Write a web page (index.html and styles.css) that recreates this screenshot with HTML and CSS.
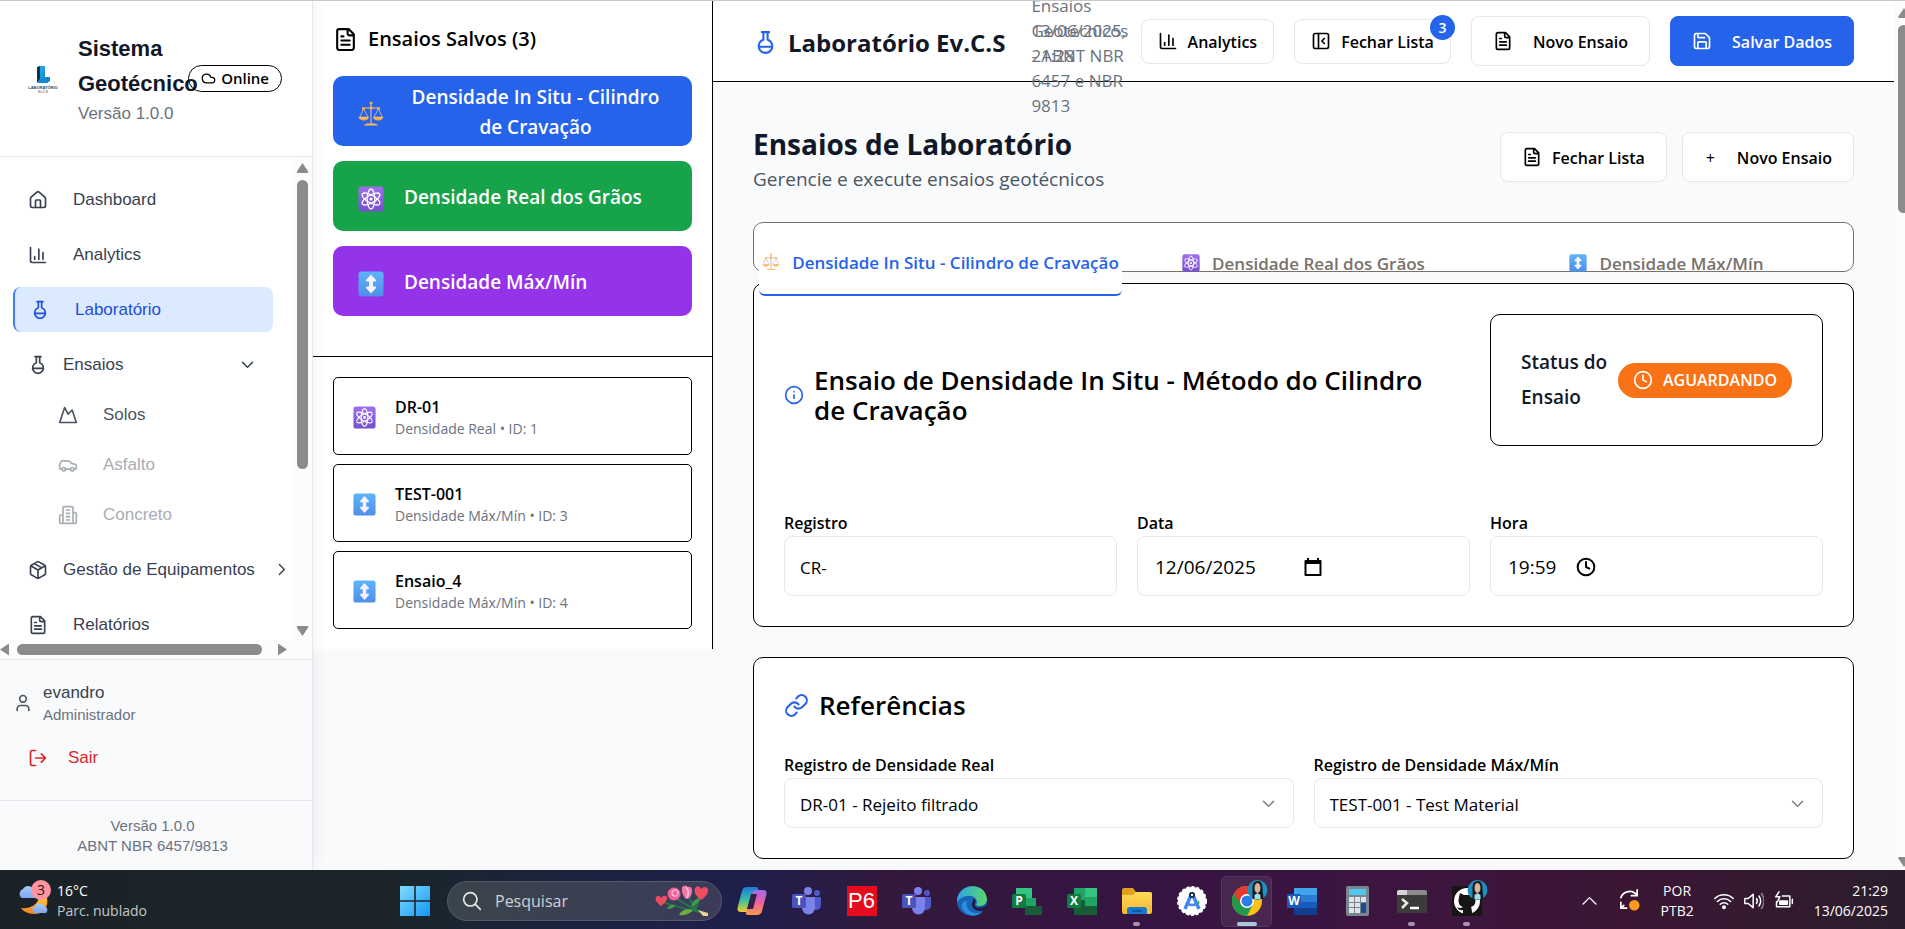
FILE: index.html
```html
<!DOCTYPE html>
<html lang="pt-BR">
<head>
<meta charset="utf-8">
<title>Laboratório Ev.C.S</title>
<link rel="stylesheet" href="styles.css">
</head>
<body>
<svg class="sprite" aria-hidden="true">
  <defs>
    <linearGradient id="g-violet" x1="0" y1="0" x2="0" y2="1"><stop offset="0" stop-color="#a070ee"/><stop offset="1" stop-color="#7650cc"/></linearGradient>
    <linearGradient id="g-sky" x1="0" y1="0" x2="0" y2="1"><stop offset="0" stop-color="#5fb4fa"/><stop offset="1" stop-color="#4f8fe8"/></linearGradient>
    <linearGradient id="g-pan" x1="0" y1="0" x2="0" y2="1"><stop offset="0" stop-color="#ffc45c"/><stop offset="1" stop-color="#f79a3e"/></linearGradient>
    <linearGradient id="g-logo" x1="0" y1="0" x2="1" y2="1"><stop offset="0" stop-color="#2aa8ea"/><stop offset="1" stop-color="#0a7ccc"/></linearGradient>
    <linearGradient id="g-win" x1="0" y1="0" x2="1" y2="1"><stop offset="0" stop-color="#7fdcff"/><stop offset="1" stop-color="#1597f5"/></linearGradient>
    <linearGradient id="g-cop1" x1="0" y1="0" x2="0" y2="1"><stop offset="0" stop-color="#1c7be0"/><stop offset=".55" stop-color="#3fc2a0"/><stop offset="1" stop-color="#f6c92c"/></linearGradient>
    <linearGradient id="g-cop2" x1="0" y1="0" x2="0" y2="1"><stop offset="0" stop-color="#a06cf0"/><stop offset=".5" stop-color="#f0609c"/><stop offset="1" stop-color="#fb9a4b"/></linearGradient>
    <linearGradient id="g-edge" x1="0" y1="0" x2="1" y2="0"><stop offset="0" stop-color="#2aa5e8"/><stop offset="1" stop-color="#5ad66a"/></linearGradient>
    <linearGradient id="g-moon" x1="0" y1="0" x2="0" y2="1"><stop offset="0" stop-color="#ffc53d"/><stop offset="1" stop-color="#f07d1a"/></linearGradient>
    <linearGradient id="g-cloud" x1="0" y1="0" x2="0" y2="1"><stop offset="0" stop-color="#a9ccfa"/><stop offset="1" stop-color="#7fa6ee"/></linearGradient>
    <linearGradient id="g-folder" x1="0" y1="0" x2="0" y2="1"><stop offset="0" stop-color="#ffd95a"/><stop offset="1" stop-color="#f9b92e"/></linearGradient>
  </defs>
  <symbol id="home" viewBox="0 0 24 24"><path d="M15 21v-8a1 1 0 0 0-1-1h-4a1 1 0 0 0-1 1v8"/><path d="M3 10a2 2 0 0 1 .709-1.528l7-5.999a2 2 0 0 1 2.582 0l7 5.999A2 2 0 0 1 21 10v9a2 2 0 0 1-2 2H5a2 2 0 0 1-2-2z"/></symbol>
  <symbol id="chart" viewBox="0 0 24 24"><path d="M3 3v16a2 2 0 0 0 2 2h16M18 17V9M13 17V5M8 17v-3"/></symbol>
  <symbol id="flask" viewBox="0 0 24 24"><path d="M10 2v7.31M14 9.3V2M8.5 2h7M14 9.3a6.5 6.5 0 1 1-4 0M5.52 16h12.96"/></symbol>
  <symbol id="mountain" viewBox="0 0 24 24"><path d="m8 3 4 8 5-5 5 15H2L8 3z"/></symbol>
  <symbol id="car" viewBox="0 0 24 24"><path d="M19 17h2c.6 0 1-.4 1-1v-3c0-.9-.7-1.7-1.5-1.9C18.7 10.6 16 10 16 10s-1.3-1.4-2.2-2.3c-.5-.4-1.1-.7-1.8-.7H5c-.6 0-1.1.4-1.4.9l-1.4 2.9A3.7 3.7 0 0 0 2 12v4c0 .6.4 1 1 1h2M9 17h6"/><circle cx="7" cy="17" r="2"/><circle cx="17" cy="17" r="2"/></symbol>
  <symbol id="building" viewBox="0 0 24 24"><path d="M6 22V4a2 2 0 0 1 2-2h8a2 2 0 0 1 2 2v18ZM6 12H4a2 2 0 0 0-2 2v6a2 2 0 0 0 2 2h2M18 9h2a2 2 0 0 1 2 2v9a2 2 0 0 1-2 2h-2M10 6h4M10 10h4M10 14h4M10 18h4"/></symbol>
  <symbol id="package" viewBox="0 0 24 24"><path d="M11 21.73a2 2 0 0 0 2 0l7-4A2 2 0 0 0 21 16V8a2 2 0 0 0-1-1.73l-7-4a2 2 0 0 0-2 0l-7 4A2 2 0 0 0 3 8v8a2 2 0 0 0 1 1.73zM12 22V12M3.29 7 12 12l8.71-5M7.5 4.27l9 5.15"/></symbol>
  <symbol id="file" viewBox="0 0 24 24"><path d="M15 2H6a2 2 0 0 0-2 2v16a2 2 0 0 0 2 2h12a2 2 0 0 0 2-2V7ZM14 2v4a2 2 0 0 0 2 2h4M10 9H8M16 13H8M16 17H8"/></symbol>
  <symbol id="user" viewBox="0 0 24 24"><path d="M19 21v-2a4 4 0 0 0-4-4H9a4 4 0 0 0-4 4v2"/><circle cx="12" cy="7" r="4"/></symbol>
  <symbol id="logout" viewBox="0 0 24 24"><path d="M9 21H5a2 2 0 0 1-2-2V5a2 2 0 0 1 2-2h4M16 17l5-5-5-5M21 12H9"/></symbol>
  <symbol id="cloud" viewBox="0 0 24 24"><path d="M17.5 19H9a7 7 0 1 1 6.71-9h1.79a4.5 4.5 0 1 1 0 9Z"/></symbol>
  <symbol id="panel" viewBox="0 0 24 24"><rect x="3" y="3" width="18" height="18" rx="2"/><path d="M9 3v18M16 15l-3-3 3-3"/></symbol>
  <symbol id="save" viewBox="0 0 24 24"><path d="M15.2 3a2 2 0 0 1 1.4.6l3.8 3.8a2 2 0 0 1 .6 1.4V19a2 2 0 0 1-2 2H5a2 2 0 0 1-2-2V5a2 2 0 0 1 2-2zM17 21v-7a1 1 0 0 0-1-1H8a1 1 0 0 0-1 1v7M7 3v4a1 1 0 0 0 1 1h7"/></symbol>
  <symbol id="info" viewBox="0 0 24 24"><circle cx="12" cy="12" r="10"/><path d="M12 16v-4M12 8h.01"/></symbol>
  <symbol id="clock" viewBox="0 0 24 24"><circle cx="12" cy="12" r="10"/><path d="M12 6v6l4 2"/></symbol>
  <symbol id="link" viewBox="0 0 24 24"><path d="M10 13a5 5 0 0 0 7.54.54l3-3a5 5 0 0 0-7.07-7.07l-1.72 1.71M14 11a5 5 0 0 0-7.54-.54l-3 3a5 5 0 0 0 7.07 7.07l1.71-1.71"/></symbol>
  <symbol id="chev-down" viewBox="0 0 24 24"><path d="m5 9 7 7 7-7"/></symbol>
  <symbol id="chev-right" viewBox="0 0 24 24"><path d="m9 5 7 7-7 7"/></symbol>
  <symbol id="calendar" viewBox="0 0 20 20"><path d="M2.5 4h15v14h-15z" fill="none" stroke="#000" stroke-width="2" stroke-linejoin="round"/><path d="M2 3h16v4H2zM4 1h2v3H4zM14 1h2v3h-2z" fill="#000" stroke="none"/></symbol>
  <symbol id="scale" viewBox="0 0 26 26">
    <path d="M13 2v20" stroke="#b9a5b4" stroke-width="1.4"/><path d="M4 7h18" stroke="#c9a38a" stroke-width="1.3"/>
    <path d="M5.500 7.500 2 16M5.500 7.500 10 16M20.500 7.500 16 16M20.500 7.500 24 16" stroke="#c2a6b4" stroke-width="1" fill="none"/>
    <path d="M.8 15.800h10c0 5-10 5-10 0zM15.200 15.800h10c0 5-10 5-10 0z" fill="url(#g-pan)"/>
    <path d="M6 24.500c0-3 14-3 14 0z" fill="#fdb94d"/><circle cx="13" cy="2" r="1.500" fill="#fbb03b"/><circle cx="13" cy="7" r="1.700" fill="#fbb03b"/><circle cx="5.500" cy="7.500" r="1.500" fill="#fbb03b"/><circle cx="20.500" cy="7.500" r="1.500" fill="#fbb03b"/>
  </symbol>
  <symbol id="atom" viewBox="0 0 26 26">
    <rect x=".5" y=".5" width="25" height="25" rx="3" fill="url(#g-violet)"/>
    <g fill="none" stroke="#fff" stroke-width="1.300"><ellipse cx="13" cy="13" rx="3.800" ry="10"/><ellipse cx="13" cy="13" rx="3.800" ry="10" transform="rotate(60 13 13)"/><ellipse cx="13" cy="13" rx="3.800" ry="10" transform="rotate(120 13 13)"/></g><circle cx="13" cy="13" r="1.600" fill="#fff"/>
  </symbol>
  <symbol id="updown" viewBox="0 0 26 26"><rect x=".5" y=".5" width="25" height="25" rx="3" fill="url(#g-sky)"/><path d="M13 3.500l5 5.500q.5 1.500-1 1.500h-2v5h2q1.500 0 1 1.500l-5 5.500-5-5.500q-.5-1.500 1-1.500h2v-5H9q-1.500 0-1-1.500z" fill="#f7f2ff"/></symbol>
  <symbol id="teams" viewBox="0 0 30 30"><circle cx="16" cy="5" r="4" fill="#7b83eb"/><circle cx="25" cy="7" r="3" fill="#5059c9"/><path d="M20 11h9v8a5 5 0 0 1-9 3z" fill="#5059c9"/><path d="M10 11h13v11a6.500 6.500 0 0 1-13 0z" fill="#7b83eb"/><rect y="8" width="14" height="14" rx="1.500" fill="#4b53bc"/></symbol>
  <symbol id="photo" viewBox="0 0 20 20"><circle cx="10" cy="10" r="10" fill="#1f8fc0"/><path d="M5 19V7q0-6 6-6 4 1 4 7v3l1 8z" fill="#15181c"/><ellipse cx="10" cy="8" rx="3" ry="5" fill="#d8b59a"/><path d="M7 15l3-2 3 2v4H7z" fill="#a5d9ec"/></symbol>
</svg>

<div class="app">
  <aside class="sidebar">
    <header class="brand">
      <svg class="brand-logo" viewBox="0 0 30 28" role="img" aria-label="Laboratório Ev.C.S"><path d="M11 1h6v11h5v4l-3 2h-8z" fill="url(#g-logo)"/><path d="M9 2l3-1v13l-3 4z" fill="#0b3350"/><path d="M9 18l3-4h10l-3 4z" fill="#1188cf"/><text class="logo-name" x="15" y="24">LABORATÓRIO</text><text class="logo-sub" x="15" y="28">Ev.C.S</text></svg>
      <div class="brand-text">
        <h1>Sistema Geotécnico</h1>
        <p>Versão 1.0.0</p>
      </div>
      <span class="online"><svg class="i i15"><use href="#cloud"/></svg>Online</span>
    </header>

    <div class="nav-frame">
      <nav class="nav">
        <a href="#"><svg class="i i20"><use href="#home"/></svg>Dashboard</a>
        <a href="#"><svg class="i i20"><use href="#chart"/></svg>Analytics</a>
        <a href="#" class="active"><svg class="i i20"><use href="#flask"/></svg>Laboratório</a>
        <button class="group"><svg class="i i20"><use href="#flask"/></svg>Ensaios<svg class="i i17 push"><use href="#chev-down"/></svg></button>
        <div class="sub">
          <a href="#"><svg class="i i20"><use href="#mountain"/></svg>Solos</a>
          <a href="#" class="off"><svg class="i i20"><use href="#car"/></svg>Asfalto</a>
          <a href="#" class="off"><svg class="i i20"><use href="#building"/></svg>Concreto</a>
        </div>
        <button class="group long"><svg class="i i20"><use href="#package"/></svg>Gestão de Equipamentos<svg class="i i17 push"><use href="#chev-right"/></svg></button>
        <a href="#"><svg class="i i20"><use href="#file"/></svg>Relatórios</a>
      </nav>
      <div class="vbar" aria-hidden="true"><i class="arr up"></i><i class="thumb thumb-nav"></i><i class="rest rest-nav"></i><i class="arr down"></i></div>
      <div class="hbar" aria-hidden="true"><i class="arr left"></i><i class="thumb"></i><i class="arr right"></i></div>
    </div>

    <section class="account">
      <div class="who"><svg class="i i20"><use href="#user"/></svg><div><p class="name">evandro</p><p class="role">Administrador</p></div></div>
      <button class="exit"><svg class="i i20"><use href="#logout"/></svg>Sair</button>
    </section>
    <footer class="side-foot"><p>Versão 1.0.0</p><p>ABNT NBR 6457/9813</p></footer>
  </aside>

  <section class="saved">
    <div class="saved-top">
      <h2><svg class="i i25"><use href="#file"/></svg>Ensaios Salvos (3)</h2>
      <button class="kind blue"><svg class="e26"><use href="#scale"/></svg><span class="wide">Densidade In Situ - Cilindro de Cravação</span></button>
      <button class="kind green"><svg class="e26"><use href="#atom"/></svg><span>Densidade Real dos Grãos</span></button>
      <button class="kind purple"><svg class="e26"><use href="#updown"/></svg><span>Densidade Máx/Mín</span></button>
    </div>
    <div class="saved-list">
      <button class="item"><svg class="e23"><use href="#atom"/></svg><span><b>DR-01</b><small>Densidade Real • ID: 1</small></span></button>
      <button class="item"><svg class="e23"><use href="#updown"/></svg><span><b>TEST-001</b><small>Densidade Máx/Mín • ID: 3</small></span></button>
      <button class="item"><svg class="e23"><use href="#updown"/></svg><span><b>Ensaio_4</b><small>Densidade Máx/Mín • ID: 4</small></span></button>
    </div>
  </section>

  <main class="main">
    <header class="topbar">
      <div class="title"><svg class="i i25"><use href="#flask"/></svg><h2>Laboratório Ev.C.S</h2></div>
      <div class="captions">
        <p class="caption">Ensaios Geotécnicos - ABNT NBR 6457 e NBR 9813</p>
        <p class="caption stamp">13/06/2025, 21:28</p>
      </div>
      <div class="tools">
        <button class="btn small"><svg class="i i20"><use href="#chart"/></svg>Analytics</button>
        <button class="btn small"><svg class="i i20"><use href="#panel"/></svg>Fechar Lista<span class="count">3</span></button>
        <button class="btn"><svg class="i i20"><use href="#file"/></svg>Novo Ensaio</button>
        <button class="btn primary"><svg class="i i20"><use href="#save"/></svg>Salvar Dados</button>
      </div>
    </header>

    <div class="content">
      <div class="page-head">
        <div><h1>Ensaios de Laboratório</h1><p>Gerencie e execute ensaios geotécnicos</p></div>
        <div class="page-actions">
          <button class="btn tight"><svg class="i i20"><use href="#file"/></svg>Fechar Lista</button>
          <button class="btn"><span class="plus">+</span>Novo Ensaio</button>
        </div>
      </div>

      <div class="tabs" role="tablist">
        <button role="tab" aria-selected="true" class="tab on"><svg class="e18"><use href="#scale"/></svg>Densidade In Situ - Cilindro de Cravação</button>
        <button role="tab" class="tab"><svg class="e18"><use href="#atom"/></svg>Densidade Real dos Grãos</button>
        <button role="tab" class="tab"><svg class="e18"><use href="#updown"/></svg>Densidade Máx/Mín</button>
      </div>

      <section class="card">
        <div class="intro">
          <h2 class="card-title"><svg class="i i20"><use href="#info"/></svg>Ensaio de Densidade In Situ - Método do Cilindro de Cravação</h2>
          <div class="status"><span class="status-label">Status do Ensaio</span><span class="pill"><svg class="i i20"><use href="#clock"/></svg>AGUARDANDO</span></div>
        </div>
        <div class="grid three">
          <div><label for="reg">Registro</label><div class="field"><input id="reg" type="text" value="CR-"></div></div>
          <div><label for="data">Data</label><div class="field native"><input id="data" class="date" type="text" value="12/06/2025"><svg class="e20"><use href="#calendar"/></svg></div></div>
          <div><label for="hora">Hora</label><div class="field native"><input id="hora" class="time" type="text" value="19:59"><svg class="i i20 bold"><use href="#clock"/></svg></div></div>
        </div>
      </section>

      <section class="card refs">
        <h2 class="card-title"><svg class="i i25"><use href="#link"/></svg>Referências</h2>
        <div class="grid two">
          <div><label for="real">Registro de Densidade Real</label><div class="pick"><select id="real"><option>DR-01 - Rejeito filtrado</option></select><svg class="i i17"><use href="#chev-down"/></svg></div></div>
          <div><label for="maxmin">Registro de Densidade Máx/Mín</label><div class="pick"><select id="maxmin"><option>TEST-001 - Test Material</option></select><svg class="i i17"><use href="#chev-down"/></svg></div></div>
        </div>
      </section>
    </div>
  </main>
  <div class="vbar page-bar" aria-hidden="true"><i class="arr up"></i><i class="thumb thumb-page"></i><i class="rest rest-page"></i><i class="arr down"></i></div>
</div>

<footer class="taskbar">
  <div class="weather">
    <div class="weather-icon">
      <svg viewBox="0 0 32 32"><path d="M5 14a5 5 0 0 1 1-9 6 6 0 0 1 11 2 4 4 0 0 1 1 7z" fill="url(#g-cloud)"/><path d="M4 24c9 1 16-3 18-10h8c2 10-5 16-12 16-6 0-11-2-14-6z" fill="url(#g-moon)"/><path d="M17 29a4 4 0 0 1 1-7 5 5 0 0 1 9 0 4 4 0 0 1 2 7z" fill="url(#g-cloud)"/></svg>
      <span class="alert">3</span>
    </div>
    <div><p>16°C</p><p class="dim">Parc. nublado</p></div>
  </div>
  <div class="dock">
    <span class="app-ico"><svg class="t30" viewBox="0 0 30 30"><path d="M0 0h14.200v14.200H0zM15.800 0H30v14.200H15.800zM0 15.800h14.200V30H0zM15.800 15.800H30V30H15.800z" fill="url(#g-win)"/></svg></span>
    <div class="search">
      <svg class="i i20 lens" viewBox="0 0 24 24"><circle cx="10" cy="10" r="8"/><path d="m16 16 6 6"/></svg>
      <input type="text" aria-label="Pesquisar" value="Pesquisar">
      <svg class="flowers" viewBox="0 0 54 32"><g fill="none" stroke="#1f7a4c" stroke-width="1.800"><path d="M7 17q18 6 38 10M19 12q12 8 26 15M32 10l10 16M46 11l-6 14"/></g><path d="M24 30q4-8 14-5-4 6-14 5z" fill="#6cae3e"/><path d="M12 24q2-5 8-4-1 4-8 4zM36 22q7-2 9-9-8 1-9 9z" fill="#3f9a4a"/><path d="M6 21Q-1 16 1 12q3-3 5 1 3-4 6-1 1 4-6 9zM46 15q-8-6-6-12 4-4 6 1 4-4 7 0 1 6-7 11z" fill="#ee4d5f"/><circle cx="19" cy="9" r="6.500" fill="#f0609a"/><circle cx="20" cy="8" r="3" fill="none" stroke="#ffb0cc" stroke-width="1.500"/><path d="M27 2q3-3 6 0 4-1 4 4 0 7-6 8-5-5-4-12z" fill="#f277a6"/><path d="M31 2q4 4 1 11" stroke="#ffc0d5" fill="none" stroke-width="1.500"/><path d="m43 25 10 3v3h-5z" fill="#ead49a"/></svg>
    </div>
    <span class="app-ico"><svg class="t30" viewBox="0 0 30 30"><path d="M10 1h9q3 0 2 3l-6 18q-1 4-5 4H4q-5 0-3-6L5 5q1-4 5-4z" fill="url(#g-cop1)"/><path d="M20 29h-9q-3 0-2-3l6-18q1-4 5-4h6q5 0 3 6l-4 15q-1 4-5 4z" fill="url(#g-cop2)"/><path d="m14 8-4 15h6l4-15z" fill="#35204a"/></svg></span>
    <span class="app-ico letter"><svg class="t30"><use href="#teams"/></svg><b class="tag">T</b></span>
    <span class="app-ico"><b class="p6">P6</b></span>
    <span class="app-ico letter"><svg class="t30"><use href="#teams"/></svg><b class="tag">T</b></span>
    <span class="app-ico"><svg class="t30" viewBox="0 0 30 30"><circle cx="15" cy="15" r="15" fill="#1565b8"/><path d="M0 14C2-3 28-5 30 13c0 7-8 8-11 6 2-2 1-8-5-9C8 9 1 13 0 17z" fill="url(#g-edge)"/><path d="M10 15c-2 9 6 15 15 11-4 5-14 5-19-2-3-6 0-9 4-9z" fill="#2b8fe0"/><path d="M17 12c4 4-1 6 1 8 2 3 8 2 11-1l1 4-4 2c-9 1-15-6-8-13z" fill="#2a1646"/></svg></span>
    <span class="app-ico letter"><svg class="t30" viewBox="0 0 30 30"><path d="M4 2h16v10H4z" fill="#33c481"/><path d="M4 12h20v9H4z" fill="#21a366"/><path d="M13 20h17v9H13z" fill="#185c37"/><rect y="8" width="14" height="14" rx="1.500" fill="#107c41"/></svg><b class="tag">P</b></span>
    <span class="app-ico letter"><svg class="t30" viewBox="0 0 30 30"><path d="M7 2h11v13H7z" fill="#21a366"/><path d="M18 2h12v9H18z" fill="#33c481"/><path d="M18 11h12v9H18z" fill="#21a366"/><path d="M7 14h11v6h12v9H7z" fill="#185c37"/><rect y="8" width="14" height="14" rx="1.500" fill="#107c41"/></svg><b class="tag">X</b></span>
    <span class="app-ico run"><svg class="t30" viewBox="0 0 30 30"><path d="M0 4q0-2 2-2h9l3 4h14q2 0 2 2v6H0z" fill="#e0a01b"/><path d="M0 9h11l3-3h14q2 0 2 2v18q0 2-2 2H2q-2 0-2-2z" fill="url(#g-folder)"/><path d="M5 28v-4q0-3 3-3h14q3 0 3 3v4z" fill="#1779d0"/><path d="M10 25h10" stroke="#0a4f97" stroke-width="1.500"/></svg></span>
    <span class="app-ico"><svg class="t30" viewBox="0 0 30 30"><circle cx="15" cy="15" r="14" fill="#fff" stroke="#fff" stroke-width="2" stroke-dasharray="3 2"/><path d="M15 7 8 23M15 7l7 16" stroke="#4285f4" stroke-width="3.500" fill="none"/><path d="M9 17q6 4 12 0" stroke="#4285f4" stroke-width="2.500" fill="none"/><circle cx="15" cy="9" r="3" fill="#073042"/><circle cx="15" cy="9" r="1.200" fill="#fff"/><path d="M21 14q3 3 0 5z" fill="#34a853"/></svg></span>
    <span class="app-ico current"><svg class="t30" viewBox="0 0 30 30"><circle cx="15" cy="15" r="15" fill="#fbc116"/><path d="M15 15 2 7.500A15 15 0 0 1 28 7.500z" fill="#e33b2e"/><path d="M15 15 2 7.500A15 15 0 0 0 15 30l6-12z" fill="#229a4c"/><path d="M2 7.500 9 19l6-11h13A15 15 0 0 0 2 7.500z" fill="#e33b2e"/><circle cx="15" cy="15" r="7" fill="#fff"/><circle cx="15" cy="15" r="5.500" fill="#2b7de9"/></svg><svg class="face"><use href="#photo"/></svg></span>
    <span class="app-ico letter"><svg class="t30" viewBox="0 0 30 30"><path d="M7 2h23v7H7z" fill="#41a5ee"/><path d="M7 9h23v7H7z" fill="#2b7cd3"/><path d="M7 16h23v6H7z" fill="#185abd"/><path d="M7 22h23v7H7z" fill="#103f91"/><rect y="8" width="14" height="14" rx="1.500" fill="#185abd"/></svg><b class="tag">W</b></span>
    <span class="app-ico"><svg class="t30" viewBox="0 0 30 30"><rect x="4" width="23" height="30" rx="2" fill="#7b858e"/><path d="M7 3h17v6H7z" fill="#4fc8f4"/><path d="M7 11h5v5H7zM13 11h5v5h-5zM19 11h5v5h-5zM7 17h5v4H7zM13 17h5v4h-5zM7 22h5v5H7zM13 22h5v5h-5z" fill="#dfe4e8"/><path d="M19 17h5v10h-5z" fill="#13508e"/></svg></span>
    <span class="app-ico run"><svg class="t30" viewBox="0 0 30 30"><rect y="4" width="30" height="23" rx="2" fill="#3b3b3b"/><path d="M0 9V6q0-2 2-2h8v5z" fill="#d5d5d5"/><path d="M10 4h18q2 0 2 2v3H10z" fill="#8b8b8b"/><path d="m5 13 5 4-5 5" stroke="#e8e8e8" stroke-width="2.500" fill="none"/><path d="M13 22h9" stroke="#fff" stroke-width="2.500"/></svg></span>
    <span class="app-ico run"><svg class="t30" viewBox="0 0 30 30"><path d="M0 0h30v30H0z" fill="#151515"/><circle cx="15" cy="15" r="13" fill="#fff"/><path d="M11 29v-5q-4 1-6-3 3 2 6 0-6-2-4-10l1-4 4 2h6l4-2 1 4q2 8-4 10 1 2 1 8z" fill="#151515"/></svg><svg class="face"><use href="#photo"/></svg></span>
  </div>
  <div class="tray">
    <svg class="i i17" viewBox="0 0 24 24"><path d="m3 17 9-9 9 9"/></svg>
    <svg class="i i23" viewBox="0 0 24 24"><path d="M3 9a9.500 9.500 0 0 1 17-2M20 1v6h-6M3 14v6h6M3 20l3-3"/><circle cx="17" cy="17" r="5.500" fill="#ff9a1f" stroke="none"/></svg>
    <div class="lang"><p>POR</p><p>PTB2</p></div>
    <div class="net">
      <svg class="i i20" viewBox="0 0 24 24"><path d="M1 9a16 16 0 0 1 22 0M4 12.500a11.500 11.500 0 0 1 16 0M7.500 16a6.500 6.500 0 0 1 9 0"/><circle cx="12" cy="19.500" r="1.500" fill="#fff"/></svg>
      <svg class="i i20" viewBox="0 0 24 24"><path d="M1 9h4l6-5v16l-6-5H1zM15 9q2 3 0 6M18 6q4 6 0 12"/><path d="M21 3q6 9 0 18" stroke="#8d7f92"/></svg>
      <svg class="i i20" viewBox="0 0 24 24"><path d="M10 6h9v13H3v-6M22 10v5"/><path d="M7 12h9v4H7z" fill="#fff"/><path d="M6 1 2 7h5l-3 6"/></svg>
    </div>
    <div class="time"><p>21:29</p><p>13/06/2025</p></div>
  </div>
</footer>
</body>
</html>
```

FILE: styles.css
```css
:root {
  --ui: "Open Sans", "Noto Sans", sans-serif;
  --side: "Liberation Sans", Arial, sans-serif;
  --blue: #2563eb;
  --line: #e5e7eb;
  --muted: #6b7280;
}

* { box-sizing: border-box; margin: 0; padding: 0; }

body {
  display: flex;
  flex-direction: column;
  height: 100vh;
  overflow: hidden;
  font: 400 17px/25px var(--ui);
  color: #000;
  background: #f9fafb;
}

button, input, select { font: inherit; color: inherit; background: none; border: 0; outline: 0; }
a { color: inherit; text-decoration: none; }

.sprite { position: absolute; width: 0; height: 0; }

/* Icons */
.i { flex: none; fill: none; stroke: currentColor; stroke-width: 2; stroke-linecap: round; stroke-linejoin: round; }
.i15 { width: 15px; height: 15px; }
.i17 { width: 17px; height: 17px; }
.i20 { width: 20px; height: 20px; }
.i23 { width: 23px; height: 23px; }
.i25 { width: 25px; height: 25px; }
.bold { stroke-width: 2.4; }
.e18 { flex: none; width: 18px; height: 18px; }
.e20 { flex: none; width: 20px; height: 20px; }
.e23 { flex: none; width: 23px; height: 23px; }
.e26 { flex: none; width: 26px; height: 26px; }
.t30 { width: 30px; height: 30px; display: block; }

.app { flex: 1; min-height: 0; display: flex; border-top: 1px solid #c8c8c8; overflow: hidden; }

/* Sidebar */
.sidebar {
  flex: 0 0 313px;
  display: flex;
  flex-direction: column;
  background: #fff;
  border-right: 1px solid var(--line);
  font-family: var(--side);
  z-index: 1;
  box-shadow: 0 0 15px rgba(0, 0, 0, .07);
}
.brand { position: relative; display: flex; align-items: center; gap: 20px; padding: 30px 28px; border-bottom: 1px solid var(--line); }
.brand-logo { flex: none; width: 30px; height: 28px; overflow: visible; }
.logo-name, .logo-sub { font: 700 4px var(--side); fill: #33485c; text-anchor: middle; }
.logo-sub { font-size: 3px; fill: #6d7c89; }
.brand-text { width: 130px; }
.brand h1 { font-size: 22px; line-height: 35px; color: #111827; }
.brand p { color: var(--muted); }
.online {
  position: absolute; top: 64px; right: 30px;
  display: flex; align-items: center; gap: 5px;
  padding: 0 12px; border: 1px solid #000; border-radius: 14px;
  font: 600 15px/25px var(--ui);
}
.nav-frame {
  flex: 1; min-height: 0;
  display: grid; grid-template: minmax(0, 1fr) 19px / minmax(0, 1fr) 19px;
  background: #fcfcfc;
  border-bottom: 1px solid var(--line);
}
.nav { display: flex; flex-direction: column; gap: 10px; padding: 20px 0 0 13px; overflow: hidden; background: #fff; color: #374151; }
.nav a, .nav button {
  flex: none; display: flex; align-items: center; gap: 25px;
  width: 260px; height: 45px; padding: 0 15px; white-space: nowrap;
}
.nav .active { color: #1d4ed8; background: #dbeafe; border-left: 2px solid #3b82f6; border-radius: 8px; }
.nav .group { gap: 15px; padding-right: 17px; }
.nav .long { width: 280px; padding-right: 3px; }
.push { margin-left: auto; }
.sub { display: flex; flex-direction: column; gap: 5px; margin-top: -5px; padding-left: 30px; }
.nav .sub a { width: auto; color: #4b5563; }
.nav .sub .off { color: #a8adb5; }

/* Scroll bars */
.vbar, .hbar { display: flex; align-items: center; background: #fcfcfc; }
.vbar { flex-direction: column; padding: 6px 0 4px; gap: 7px; }
.hbar { padding: 0 6px 0 0; gap: 8px; }
.thumb { background: #8b8b8b; border-radius: 6px; }
.vbar .thumb { width: 11px; }
.hbar .thumb { flex: 1; height: 11px; margin-right: 8px; }
.thumb-nav { flex: 288; }
.rest-nav { flex: 142; }
.thumb-page { flex: 188; }
.rest-page { flex: 628; }
.arr { flex: none; width: 12px; height: 10px; background: #8b8b8b; }
.up { clip-path: polygon(50% 0, 100% 90%, 92% 100%, 8% 100%, 0 90%); }
.down { clip-path: polygon(50% 100%, 100% 10%, 92% 0, 8% 0, 0 10%); }
.left, .right { width: 9px; height: 12px; }
.left { clip-path: polygon(0 50%, 100% 0, 100% 100%); }
.right { clip-path: polygon(100% 50%, 0 0, 0 100%); }

.account { background: #f9fafb; padding: 20px 13px; border-bottom: 1px solid var(--line); color: #374151; }
.who { display: flex; align-items: center; gap: 10px; color: #4b5563; }
.who .name { color: #374151; }
.who .role { color: var(--muted); font-size: 15px; line-height: 20px; }
.exit { display: flex; align-items: center; gap: 20px; height: 45px; margin-top: 10px; padding: 0 15px; color: #dc2626; }
.side-foot { padding: 15px 7px 14px 0; background: #f9fafb; color: var(--muted); text-align: center; font-size: 15px; line-height: 20px; }

/* Saved tests */
.saved { flex: 0 0 400px; align-self: flex-start; background: #fff; border-right: 1px solid #000; }
.saved-top { display: flex; flex-direction: column; gap: 15px; padding: 20px 20px 40px; border-bottom: 1px solid #000; }
.saved h2 { display: flex; align-items: center; gap: 10px; margin-bottom: 5px; padding-top: 1px; font-size: 20px; line-height: 34px; font-weight: 600; }
.kind { display: flex; align-items: center; gap: 20px; height: 70px; padding: 2px 25px 0; border-radius: 10px; color: #fff; font-size: 19px; line-height: 30px; font-weight: 600; }
.kind .wide { flex: 1; }
.kind svg { margin-top: 3px; }
.blue { background: #2563eb; }
.green { background: #16a34a; }
.purple { background: #9333ea; }
.saved-list { display: flex; flex-direction: column; gap: 9px; padding: 20px; }
.item { display: flex; align-items: center; gap: 19px; height: 78px; padding: 2px 19px 0; border: 1px solid #000; border-radius: 5px; text-align: left; }
.item b, .item small { display: block; }
.item b { font-weight: 600; font-size: 16px; line-height: 23px; }
.item small { font-size: 14px; line-height: 20px; color: var(--muted); }

/* Main */
.main { flex: 1; min-width: 0; }
.topbar { display: flex; align-items: center; height: 81px; padding: 0 40px; background: #fff; border-bottom: 1px solid #000; }
.title { display: flex; align-items: center; gap: 10px; padding-top: 2px; white-space: nowrap; }
.title svg { color: var(--blue); }
.title h2 { font-size: 24px; line-height: 35px; color: #111827; }
.captions { flex: 1; display: grid; align-items: center; min-width: 0; margin-top: 28px; padding-left: 26px; color: var(--muted); }
.caption { grid-area: 1 / 1; width: 100px; }
.stamp { padding-bottom: 25px; }
.tools, .page-actions { flex: none; display: flex; align-items: center; gap: 20px; }
.page-actions { gap: 15px; }
.btn {
  position: relative;
  display: flex; align-items: center; gap: 20px;
  height: 50px; padding: 2px 21px 0;
  background: #fff; border: 1px solid var(--line); border-radius: 8px;
  font-size: 16px; font-weight: 600; white-space: nowrap;
}
.btn svg { margin-bottom: 3px; }
.small { gap: 10px; height: 45px; padding: 2px 16px 0; }
.tight { gap: 10px; }
.primary { background: var(--blue); border-color: var(--blue); color: #fff; }
.plus { width: 13px; font-weight: 400; }
.count {
  position: absolute; top: -5px; right: -5px;
  width: 25px; height: 25px; border-radius: 50%;
  background: var(--blue); color: #fff; font-size: 14px; line-height: 25px;
}

.content { padding: 40px; }
.page-head { display: flex; align-items: center; justify-content: space-between; margin-bottom: 30px; }
.page-head h1 { font-size: 28px; line-height: 45px; color: #111827; }
.page-head p { font-size: 19px; color: #4b5563; }

.tabs { display: grid; grid-template-columns: repeat(3, 1fr); align-items: start; height: 50px; padding: 5px; margin-bottom: 11px; background: #fff; border: 1px solid #78716c; border-radius: 10px; }
.tab { position: relative; display: flex; align-items: center; justify-content: center; gap: 12px; height: 68px; padding-top: 2px; color: #78716c; font-size: 17px; font-weight: 600; white-space: nowrap; }
.on { background: #fff; color: var(--blue); border-bottom: 2px solid var(--blue); border-radius: 6px; }
.on svg { opacity: .8; }

.card { background: #fff; border: 1px solid #000; border-radius: 10px; padding: 30px; }
.refs { margin-top: 30px; }
.intro, .three { display: grid; grid-template-columns: repeat(3, minmax(0, 1fr)); gap: 20px; }
.intro { margin-bottom: 65px; }
.intro .card-title { grid-column: span 2; padding: 30px 20px 0 0; }
.two { display: grid; grid-template-columns: repeat(2, minmax(0, 1fr)); gap: 20px; margin-top: 33px; }
.card-title { display: flex; align-items: center; gap: 10px; padding-top: 2px; font-size: 26px; line-height: 30px; font-weight: 600; }
.card-title svg { color: var(--blue); }
.status { display: flex; align-items: center; gap: 5px; padding: 30px; border: 1px solid #000; border-radius: 10px; }
.status-label { flex: 1; font-size: 19px; line-height: 35px; font-weight: 600; color: #111827; }
.pill { display: flex; align-items: center; gap: 10px; padding: 5px 15px; border-radius: 18px; background: #f97316; color: #fff; font-size: 16px; font-weight: 600; }
label { display: block; font-size: 16px; font-weight: 600; }
.field { display: flex; align-items: center; height: 60px; padding: 2px 15px 0; border: 1px solid var(--line); border-radius: 8px; }
.field input { width: 100%; }
.native { gap: 18px; padding: 2px 17px 0; }
.field .date { width: 130px; font-size: 19px; }
.field .time { width: 50px; font-size: 19px; }
.pick { display: grid; align-items: center; }
.pick > * { grid-area: 1 / 1; }
.pick select { height: 50px; padding: 2px 15px 0; border: 1px solid var(--line); border-radius: 8px; appearance: none; }
.pick svg { justify-self: end; margin-right: 17px; color: #808080; pointer-events: none; }

.page-bar { flex: 0 0 11px; padding: 7px 0 3px; align-items: flex-start; overflow: hidden; }
.page-bar i { margin-left: 4px; }

/* Taskbar */
.taskbar {
  flex: none; display: flex; align-items: center; height: 59px; padding: 2px 17px 0;
  background: linear-gradient(90deg, #1b2227 0, #1b2529 20%, #1b2340 31%, #1f1f4c 39%, #33193c 47%, #361443 60%, #3c1540 72%, #3a1633 86%, #2b1d2d 100%);
  color: #fff; font-size: 14px; line-height: 20px;
}
.weather { flex: 0 0 370px; display: flex; align-items: center; gap: 8px; }
.weather-icon { position: relative; width: 32px; height: 34px; }
.alert { position: absolute; top: -4px; left: 14px; width: 20px; height: 20px; border-radius: 50%; background: #ff94a0; color: #2a1416; text-align: center; }
.dim { color: #c3c6c8; }
.dock { display: flex; align-items: center; }
.app-ico { position: relative; width: 55px; height: 50px; display: flex; align-items: center; justify-content: center; }
.search { display: flex; align-items: center; gap: 13px; width: 275px; height: 40px; margin: 0 2px 0 5px; padding: 0 12px 0 14px; border: 1px solid #565a6d; border-radius: 20px; background: linear-gradient(90deg, #3a444b, #3b3b5a); }
.search input { flex: 1; min-width: 0; font-size: 16px; color: #cfd2d6; }
.lens { stroke: #e6e6e6; }
.flowers { flex: none; width: 54px; height: 32px; }
.tag { position: absolute; left: 13px; top: 15px; width: 14px; text-align: center; font-size: 12px; line-height: 20px; }
.p6 { width: 30px; height: 30px; background: #e60a1e; font: 400 22px/30px var(--side); text-align: center; }
.run::after, .current::after { content: ""; position: absolute; bottom: 0; width: 7px; height: 4px; border-radius: 2px; background: #a893ad; }
.current::after { width: 20px; background: #a9c9de; }
.current::before { content: ""; position: absolute; top: 0; right: 2px; bottom: -1px; left: 2px; border: 1px solid #55385e; border-radius: 5px; background: rgba(255, 255, 255, .08); }
.face { position: absolute; top: 4px; right: 6px; width: 21px; height: 20px; }
.current svg { z-index: 1; }
.tray { display: flex; align-items: center; gap: 20px; margin-left: auto; text-align: right; }
.tray .i { stroke-width: 1.8; }
.lang { text-align: center; }
.net { display: flex; gap: 10px; }
```
